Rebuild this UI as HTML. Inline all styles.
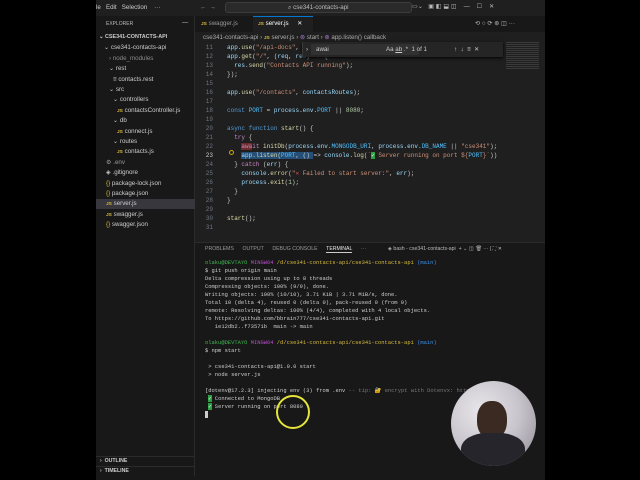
<!DOCTYPE html>
<html><head><style>
*{margin:0;padding:0;box-sizing:border-box}
body{width:640px;height:480px;background:#000;position:relative;overflow:hidden;font-family:"Liberation Sans",sans-serif;color:#ccc}
.a{position:absolute;white-space:pre}
.m{font-family:"Liberation Mono",monospace;font-size:6px}
.sb{position:absolute;left:96px;top:16px;width:99px;height:460px;background:#181818;border-right:1px solid #2b2b2b}
.ed{position:absolute;left:195px;top:16px;width:350px;height:226px;background:#1f1f1f}
.tp{position:absolute;left:195px;top:242px;width:350px;height:234px;background:#181818;border-top:1px solid #2b2b2b}
.fi{font-size:6.2px;color:#ccc}
.js{color:#d7ba3d;font-weight:bold;font-size:4.8px}
.k{color:#569cd6}.f{color:#dcdcaa}.s{color:#ce9178}.v{color:#9cdcfe}.n{color:#b5cea8}.p{color:#c586c0}.c{color:#4fc1ff}
.ln{color:#6e7681;text-align:right;width:16px}
</style></head><body>
<!-- title bar -->
<div class="a" style="left:96px;top:0;width:449px;height:16px;background:#1f1f1f"></div>
<div class="a fi" style="left:96px;top:4px">le   Edit   Selection    ···</div>
<div class="a fi" style="left:200px;top:4px;color:#999">←  →</div>
<div class="a" style="left:225px;top:2px;width:187px;height:11px;background:#2a2a2a;border:1px solid #3c3c3c;border-radius:3px"></div>
<div class="a fi" style="left:288px;top:4px;color:#bbb">⌕ cse341-contacts-api</div>
<div class="a fi" style="left:412px;top:3px;color:#bbb">▭⌄   ▣ ◧ ⬓ ◫    —    ☐    ✕</div>
<!-- sidebar -->
<div class="sb"></div>
<div class="a fi" style="left:106px;top:21px;font-size:5px;color:#bbb">EXPLORER</div>
<div class="a fi" style="left:182px;top:19px">—</div>
<div class="a" style="left:96px;top:199px;width:99px;height:10px;background:#37373d"></div>
<div class="a fi" style="left:99px;top:34px;font-weight:bold;font-size:5.4px">⌄ CSE341-CONTACTS-API</div>
<div class="a fi" style="left:104px;top:44px">⌄ cse341-contacts-api</div>
<div class="a fi" style="left:109px;top:55px;color:#8b8b8b">› node_modules</div>
<div class="a fi" style="left:109px;top:65px">⌄ rest</div>
<div class="a fi" style="left:113px;top:76px">≡ contacts.rest</div>
<div class="a fi" style="left:109px;top:86px">⌄ src</div>
<div class="a fi" style="left:113px;top:96px">⌄ controllers</div>
<div class="a fi" style="left:117px;top:107px"><span class="js">JS</span> contactsController.js</div>
<div class="a fi" style="left:113px;top:117px">⌄ db</div>
<div class="a fi" style="left:117px;top:128px"><span class="js">JS</span> connect.js</div>
<div class="a fi" style="left:113px;top:138px">⌄ routes</div>
<div class="a fi" style="left:117px;top:148px"><span class="js">JS</span> contacts.js</div>
<div class="a fi" style="left:106px;top:159px;color:#999">⚙ .env</div>
<div class="a fi" style="left:106px;top:169px">◈ .gitignore</div>
<div class="a fi" style="left:106px;top:180px"><span style="color:#d7ba3d">{}</span> package-lock.json</div>
<div class="a fi" style="left:106px;top:190px"><span style="color:#d7ba3d">{}</span> package.json</div>
<div class="a fi" style="left:106px;top:200px"><span class="js">JS</span> server.js</div>
<div class="a fi" style="left:106px;top:211px"><span class="js">JS</span> swagger.js</div>
<div class="a fi" style="left:106px;top:221px"><span style="color:#d7ba3d">{}</span> swagger.json</div>
<div class="a" style="left:96px;top:456px;width:99px;height:1px;background:#2b2b2b"></div>
<div class="a fi" style="left:100px;top:458px;font-size:5.2px;font-weight:bold">›  OUTLINE</div>
<div class="a" style="left:96px;top:466px;width:99px;height:1px;background:#2b2b2b"></div>
<div class="a fi" style="left:100px;top:468px;font-size:5.2px;font-weight:bold">›  TIMELINE</div>
<!-- editor -->
<div class="ed"></div>
<div class="a" style="left:195px;top:16px;width:350px;height:16px;background:#181818"></div>
<div class="a fi" style="left:201px;top:20px;color:#999"><span class="js">JS</span> swagger.js</div>
<div class="a" style="left:253px;top:16px;width:60px;height:16px;background:#1f1f1f;border-top:1px solid #0078d4"></div>
<div class="a fi" style="left:258px;top:20px;color:#fff"><span class="js">JS</span> server.js     ✕</div>
<div class="a fi" style="left:475px;top:20px;color:#bbb">⟲ ○ ⟳ ⊛ ◫ ···</div>
<div class="a fi" style="left:203px;top:34px;color:#aaa">cse341-contacts-api › <span class="js">JS</span> server.js › <span style="color:#b180d7">⊚</span> start › <span style="color:#b180d7">⊚</span> app.listen() callback</div>
<div class="a" style="left:506px;top:42px;width:33px;height:28px;opacity:.5;background:linear-gradient(#555 1px,transparent 1px) 0 0/20px 2px"></div>
<div class="a m" style="left:197px;top:43px;line-height:9px"><div style="display:flex"><div class="ln">11
12
13
14
15
16
17
18
19
20
21
22
<span style="color:#ccc">23</span>
24
25
26
27
28
29
30
31</div><div style="margin-left:14px;color:#ccc"><span class="v">app</span>.<span class="f">use</span>(<span class="s">"/api-docs"</span>,
<span class="v">app</span>.<span class="f">get</span>(<span class="s">"/"</span>, (<span class="v">req</span>, <span class="v">res</span>) =&gt; {
  <span class="v">res</span>.<span class="f">send</span>(<span class="s">"Contacts API running"</span>);
});

<span class="v">app</span>.<span class="f">use</span>(<span class="s">"/contacts"</span>, <span class="v">contactsRoutes</span>);

<span class="k">const</span> <span class="c">PORT</span> = <span class="v">process</span>.<span class="v">env</span>.<span class="c">PORT</span> || <span class="n">8080</span>;

<span class="k">async</span> <span class="k">function</span> <span class="f">start</span>() {
  <span class="p">try</span> {
    <span class="p" style="background:#6b2b2b">awa</span><span class="p">it</span> <span class="f">initDb</span>(<span class="v">process</span>.<span class="v">env</span>.<span class="c">MONGODB_URI</span>, <span class="v">process</span>.<span class="v">env</span>.<span class="c">DB_NAME</span> || <span class="s">"cse341"</span>);
    <span style="background:#264f78"><span class="v">app</span>.<span class="f">listen</span>(<span class="c">PORT</span>, () </span>=&gt; <span class="v">console</span>.<span class="f">log</span>(<span class="s">`<span style="background:#2ea043;color:#fff">✓</span> Server running on port ${<span class="c">PORT</span>}`</span>))
  } <span class="p">catch</span> (<span class="v">err</span>) {
    <span class="v">console</span>.<span class="f">error</span>(<span class="s">"<span style="color:#e5534b">✕</span> Failed to start server:"</span>, <span class="v">err</span>);
    <span class="v">process</span>.<span class="f">exit</span>(<span class="n">1</span>);
  }
}

<span class="f">start</span>();
</div></div></div>
<div class="a" style="left:229px;top:150px;width:5px;height:5px;border:1px solid #cca700;border-radius:50%"></div>
<!-- find widget -->
<div class="a" style="left:302px;top:42px;width:201px;height:15px;background:#252526;box-shadow:0 1px 3px #000;border-left:1px solid #3c3c3c"></div>
<div class="a fi" style="left:306px;top:46px">›</div>
<div class="a" style="left:311px;top:44px;width:108px;height:11px;background:#313131"></div>
<div class="a fi" style="left:316px;top:46px">awai</div>
<div class="a fi" style="left:386px;top:46px">Aa <u>ab</u> .*  1 of 1</div>
<div class="a fi" style="left:454px;top:46px">↑  ↓  ≡  ✕</div>
<!-- terminal -->
<div class="tp"></div>
<div class="a fi" style="left:205px;top:246px;font-size:5.2px;color:#999">PROBLEMS      OUTPUT      DEBUG CONSOLE      <span style="color:#e7e7e7;border-bottom:1px solid #ccc">TERMINAL</span>      ···</div>
<div class="a fi" style="left:388px;top:246px;font-size:5.2px;color:#bbb">◈ bash - cse341-contacts-api  + ⌄ ◫ 🗑 ··· | ⛶ ✕</div>
<div class="a m" style="left:205px;top:259px;line-height:8px;color:#ccc;font-size:5.45px"><span style="color:#3fb950">olaku@DEVTAYO</span> <span style="color:#bc4fd0">MINGW64</span> <span style="color:#d7ba3d">/d/cse341-contacts-api/cse341-contacts-api</span> <span style="color:#3b8eea">(main)</span>
$ git push origin main
Delta compression using up to 8 threads
Compressing objects: 100% (9/9), done.
Writing objects: 100% (10/10), 3.71 KiB | 3.71 MiB/s, done.
Total 10 (delta 4), reused 0 (delta 0), pack-reused 0 (from 0)
remote: Resolving deltas: 100% (4/4), completed with 4 local objects.
To https://github.com/bbrain777/cse341-contacts-api.git
   1e12db2..f73571b  main -&gt; main

<span style="color:#3fb950">olaku@DEVTAYO</span> <span style="color:#bc4fd0">MINGW64</span> <span style="color:#d7ba3d">/d/cse341-contacts-api/cse341-contacts-api</span> <span style="color:#3b8eea">(main)</span>
$ npm start

 &gt; cse341-contacts-api@1.0.0 start
 &gt; node server.js

[dotenv@17.2.3] injecting env (3) from .env <span style="color:#777">-- tip: 🔐 encrypt with Dotenvx: https://dotenvx.com</span>
 <span style="background:#2ea043;color:#fff">✓</span> Connected to MongoDB
 <span style="background:#2ea043;color:#fff">✓</span> Server running on port 8080
<span style="background:#ccc">▌</span></div>
<div class="a" style="left:276px;top:395px;width:34px;height:34px;border:2px solid #e4e43a;border-radius:50%"></div>
<!-- webcam -->
<div class="a" style="left:451px;top:381px;width:85px;height:85px;border-radius:50%;overflow:hidden;background:radial-gradient(circle at 35% 35%,#e8e6ea 0,#c8c4cc 50%,#8a8590 100%)">
<div style="position:absolute;left:26px;top:20px;width:30px;height:38px;border-radius:45%;background:#3a2a22"></div>
<div style="position:absolute;left:10px;top:52px;width:64px;height:40px;border-radius:40% 40% 0 0;background:#26252b"></div>
</div>
<!-- status bar -->
<div class="a" style="left:96px;top:476px;width:449px;height:4px;background:#181818"></div>
</body></html>
